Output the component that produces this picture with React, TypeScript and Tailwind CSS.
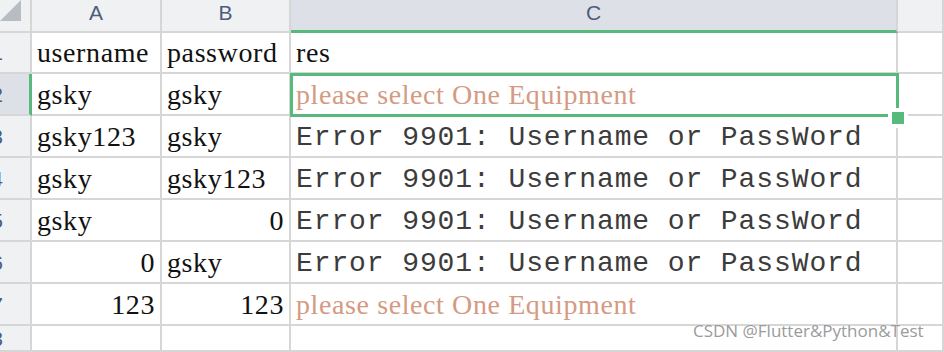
import React from "react";

type Kind = "serif" | "salmon" | "mono";
type Cell = { v: string; right?: boolean; kind?: Kind };

const ERR = "Error 9901: Username or PassWord";
const PLEASE = "please select One Equipment";

const rows: Cell[][] = [
  [{ v: "username" }, { v: "password" }, { v: "res" }],
  [{ v: "gsky" }, { v: "gsky" }, { v: PLEASE, kind: "salmon" }],
  [{ v: "gsky123" }, { v: "gsky" }, { v: ERR, kind: "mono" }],
  [{ v: "gsky" }, { v: "gsky123" }, { v: ERR, kind: "mono" }],
  [{ v: "gsky" }, { v: "0", right: true }, { v: ERR, kind: "mono" }],
  [{ v: "0", right: true }, { v: "gsky" }, { v: ERR, kind: "mono" }],
  [{ v: "123", right: true }, { v: "123", right: true }, { v: PLEASE, kind: "salmon" }],
  [{ v: "" }, { v: "" }, { v: "" }],
];

const line = "border-r-2 border-b-2 border-[#d6d6d6]";
const hdrText = "font-['Liberation_Sans',sans-serif] text-[21px] text-[#4e5c7c]";

function DataCell({ cell, selected }: { cell: Cell; selected?: boolean }) {
  const font =
    cell.kind === "mono"
      ? "font-['Liberation_Mono',monospace] text-[28px] tracking-[0.9px] text-[#3c3c3c] pt-[3px]"
      : cell.kind === "salmon"
      ? "font-['Liberation_Serif',serif] text-[28px] tracking-[0.6px] text-[#d49a82] pt-[1px]"
      : "font-['Liberation_Serif',serif] text-[28px] tracking-[0.6px] text-[#111111] pt-[1px]";
  return (
    <div
      className={`${line} relative flex items-center whitespace-nowrap px-[5px] leading-none ${
        cell.right ? "justify-end" : "justify-start"
      } ${font}`}
    >
      {cell.v}
      {selected && (
        <>
          <div className="absolute -left-[1px] -top-[1px] z-10 h-[44px] w-[609px] border-[3px] border-[#58b97c]" />
          <div className="absolute left-[597px] top-[34px] z-10 h-[20px] w-[20px] border-4 border-white bg-[#58b97c]" />
        </>
      )}
    </div>
  );
}

export default function App() {
  return (
    <div className="relative h-[352px] w-[944px] overflow-hidden bg-white">
      <div className="grid h-full grid-cols-[32px_130px_129px_607px_1fr] grid-rows-[33px_41px_repeat(6,42px)_1fr]">
        {/* column headers */}
        <div className={`${line} bg-[#f0f1f3]`}>
          <svg width="21" height="21" viewBox="0 0 21 21">
            <polygon points="21,0 21,21 0,21" fill="#b8bcc3" />
          </svg>
        </div>
        <div className={`${line} flex justify-center bg-[#f0f1f3] leading-[26px] ${hdrText}`}>A</div>
        <div className={`${line} flex justify-center bg-[#f0f1f3] leading-[26px] ${hdrText}`}>B</div>
        <div className="flex justify-center border-r-2 border-b-[3px] border-r-[#d6d6d6] border-b-[#58b97c] bg-[#dde0e7] leading-[26px] text-[21px] text-[#4e5c7c] font-['Liberation_Sans',sans-serif]">
          C
        </div>
        <div className={`${line} bg-[#f0f1f3]`} />

        {rows.map((r, i) => (
          <React.Fragment key={i}>
            <div
              className={
                i === 1
                  ? "flex items-center overflow-hidden border-b-2 border-r-[3px] border-b-[#d6d6d6] border-r-[#58b97c] bg-[#dde0e7]"
                  : `${line} flex items-center overflow-hidden bg-[#f0f1f3]`
              }
            >
              <span className={`-ml-[9px] w-3 shrink-0 text-center leading-none ${hdrText}`}>{i + 1}</span>
            </div>
            <DataCell cell={r[0]} />
            <DataCell cell={r[1]} />
            <DataCell cell={r[2]} selected={i === 1} />
            <div className={line} />
          </React.Fragment>
        ))}
      </div>

      <div className="absolute left-[693px] top-[322px] whitespace-nowrap font-['Open_Sans',sans-serif] text-[17px] leading-none text-[#9b9b9b] [text-shadow:0_0_2px_white]">
        CSDN @Flutter&amp;Python&amp;Test
      </div>
    </div>
  );
}
